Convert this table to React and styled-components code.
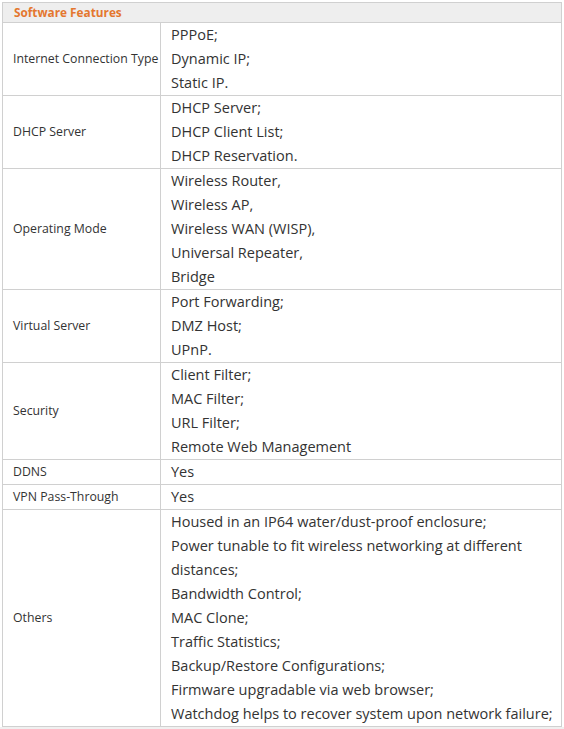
import React from "react";
import styled, { createGlobalStyle } from "styled-components";

const GlobalStyle = createGlobalStyle`
  html, body {
    margin: 0;
    padding: 0;
    background: #fff;
  }
  body {
    font-family: "Open Sans", "Noto Sans", sans-serif;
    color: #333;
  }
`;

const Page = styled.div`
  padding: 2px 0 0 2px;
  width: 564px;
  height: 729px;
  box-sizing: border-box;
  overflow: hidden;
  background: linear-gradient(#fff 0 727px, #f0f0f0 727px);
`;

const Table = styled.table`
  border-collapse: collapse;
  width: 560px;
  table-layout: fixed;
`;

const HeadCell = styled.th`
  background: #eeeeee;
  border: 1px solid #d0d0d0;
  height: 19px;
  padding: 0 0 0 11px;
  text-align: left;
  font-size: 11.8px;
  font-weight: 700;
  color: #e4772f;
  line-height: 19px;
`;

const Label = styled.td`
  border: 1px solid #d0d0d0;
  padding: 0 0 0 10px;
  font-size: 12.3px;
  line-height: 24px;
  vertical-align: middle;
  white-space: nowrap;
  overflow: hidden;
`;

const Value = styled.td`
  border: 1px solid #d0d0d0;
  padding: 0 4px 0 10px;
  font-size: 14.5px;
  line-height: 24px;
  vertical-align: top;
`;

const Line = styled.div``;

const rows = [
  ["Internet Connection Type", ["PPPoE;", "Dynamic IP;", "Static IP."]],
  ["DHCP Server", ["DHCP Server;", "DHCP Client List;", "DHCP Reservation."]],
  [
    "Operating Mode",
    [
      "Wireless Router,",
      "Wireless AP,",
      "Wireless WAN (WISP),",
      "Universal Repeater,",
      "Bridge",
    ],
  ],
  ["Virtual Server", ["Port Forwarding;", "DMZ Host;", "UPnP."]],
  [
    "Security",
    ["Client Filter;", "MAC Filter;", "URL Filter;", "Remote Web Management"],
  ],
  ["DDNS", ["Yes"]],
  ["VPN Pass-Through", ["Yes"]],
  [
    "Others",
    [
      "Housed in an IP64 water/dust-proof enclosure;",
      "Power tunable to fit wireless networking at different distances;",
      "Bandwidth Control;",
      "MAC Clone;",
      "Traffic Statistics;",
      "Backup/Restore Configurations;",
      "Firmware upgradable via web browser;",
      "Watchdog helps to recover system upon network failure;",
    ],
  ],
];

export default function App() {
  return (
    <>
      <GlobalStyle />
      <Page>
        <Table>
          <colgroup>
            <col style={{ width: 158 }} />
            <col />
          </colgroup>
          <thead>
            <tr>
              <HeadCell colSpan={2}>Software Features</HeadCell>
            </tr>
          </thead>
          <tbody>
            {rows.map(([label, lines]) => (
              <tr key={label}>
                <Label>{label}</Label>
                <Value>
                  {lines.map((l) => (
                    <Line key={l}>{l}</Line>
                  ))}
                </Value>
              </tr>
            ))}
          </tbody>
        </Table>
      </Page>
    </>
  );
}
